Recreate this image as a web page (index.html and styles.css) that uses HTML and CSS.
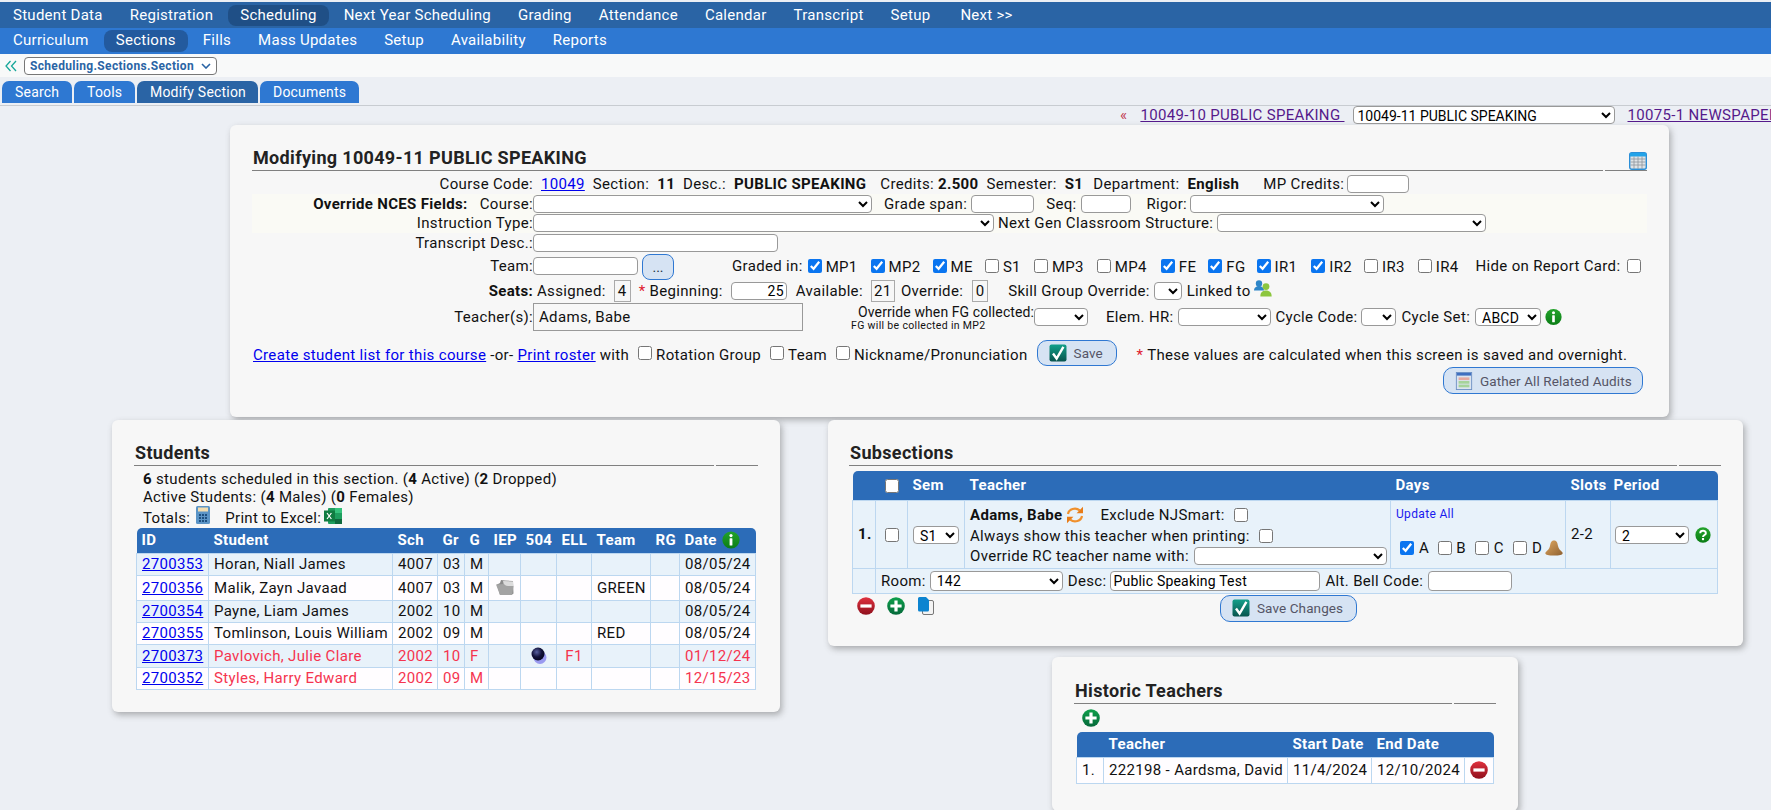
FILE: index.html
```html
<!DOCTYPE html>
<html lang="en">
<head>
<meta charset="utf-8">
<title>Scheduling Section</title>
<link rel="stylesheet" href="styles.css">
</head>
<body>
<svg class="defs" aria-hidden="true">
  <defs>
    <linearGradient id="gGreen" x1="0" y1="0" x2="0" y2="1"><stop offset="0" stop-color="#23a32b"/><stop offset="1" stop-color="#0b7d16"/></linearGradient>
    <linearGradient id="gRed" x1="0" y1="0" x2="0" y2="1"><stop offset="0" stop-color="#e0323f"/><stop offset="1" stop-color="#8f0f1c"/></linearGradient>
    <linearGradient id="gPlus" x1="0" y1="0" x2="0" y2="1"><stop offset="0" stop-color="#0fa04c"/><stop offset="1" stop-color="#05693a"/></linearGradient>
    <linearGradient id="gTeal" x1="0" y1="0" x2="0" y2="1"><stop offset="0" stop-color="#12a08a"/><stop offset="1" stop-color="#08544e"/></linearGradient>
    <linearGradient id="gBell" x1="0" y1="0" x2="1" y2="1"><stop offset="0" stop-color="#e0a860"/><stop offset="1" stop-color="#8e6030"/></linearGradient>
    <radialGradient id="gBall" cx=".4" cy=".35" r=".7"><stop offset="0" stop-color="#5860a0"/><stop offset=".55" stop-color="#12123a"/><stop offset="1" stop-color="#05051c"/></radialGradient>
    <symbol id="i-info" viewBox="0 0 18 18"><circle cx="9" cy="9" r="8.6" fill="url(#gGreen)"/><circle cx="9" cy="4.6" r="1.6" fill="#fff"/><rect x="7.6" y="7.2" width="2.8" height="7.4" rx=".6" fill="#fff"/></symbol>
    <symbol id="i-help" viewBox="0 0 18 18"><circle cx="9" cy="9" r="8.6" fill="url(#gGreen)"/><path d="M5.9 6.9C5.9 3.4 12.2 3.4 12.2 6.9 12.2 9 9 9 9 11.2" fill="none" stroke="#fff" stroke-width="2.2"/><rect x="7.8" y="12.4" width="2.4" height="2.4" fill="#fff"/></symbol>
    <symbol id="i-minus" viewBox="0 0 18 18"><circle cx="9" cy="9" r="8.8" fill="url(#gRed)"/><rect x="3.4" y="7.4" width="11.2" height="3.2" fill="#fff"/></symbol>
    <symbol id="i-plus" viewBox="0 0 18 18"><circle cx="9" cy="9" r="8.8" fill="url(#gPlus)"/><path d="M3.4 9h11.2M9 3.4v11.2" stroke="#fff" stroke-width="3.2"/></symbol>
    <symbol id="i-check" viewBox="0 0 18 18"><rect x=".5" y=".5" width="17" height="17" rx="2" fill="url(#gTeal)"/><path d="M4 9.500l3.600 5L14.400 2.800" fill="none" stroke="#fff" stroke-width="2.400"/></symbol>
    <symbol id="i-cal" viewBox="0 0 18 18"><rect x=".7" y=".7" width="16.600" height="16.600" rx="2" fill="#dfe3e6" stroke="#2b8fd8" stroke-width="1.400"/><rect x="1" y="1" width="16" height="3.500" fill="#22a3e8"/><path d="M1.500 7h15M1.500 10h15M1.500 13h15M5 4.500v12.500M9 4.500v12.500M13 4.500v12.500" stroke="#8d959c" stroke-width=".8"/></symbol>
    <symbol id="i-people" viewBox="0 0 18 17"><circle cx="5" cy="3.400" r="3.200" fill="#2e86c8"/><path d="M0 10.500c0-6 10-6 10 0z" fill="#2e86c8"/><circle cx="12" cy="6.600" r="3.400" fill="#8cc63e"/><path d="M6.400 16.400c-.8-7.800 11.800-7.800 11.200 0z" fill="#8cc63e"/></symbol>
    <symbol id="i-grid" viewBox="0 0 18 20"><rect x=".5" y=".5" width="17" height="19" fill="#dbe4ef" stroke="#6c8fc4"/><rect x="1" y="1" width="16" height="3" fill="#3f6fc0"/><rect x="3" y="6" width="12" height="3" fill="#e6a9a0"/><rect x="3" y="10" width="12" height="3" fill="#a5d39a"/><rect x="3" y="14" width="12" height="3" fill="#a5d39a"/></symbol>
    <symbol id="i-calc" viewBox="0 0 14 18"><rect width="14" height="18" rx="1.500" fill="#5b94c6"/><rect x="2" y="1.500" width="10" height="4" fill="#f1dcb0"/><path d="M3 8h2v2H3zM6 8h2v2H6zM9 8h2v2H9zM3 11h2v2H3zM6 11h2v2H6zM9 11h2v2H9zM3 14h2v2H3zM6 14h2v2H6zM9 14h2v2H9z" fill="#1d4f80"/></symbol>
    <symbol id="i-xls" viewBox="0 0 18 16"><rect x="4" y="0" width="14" height="16" rx="1" fill="#1e9e5e"/><rect x="11" y="0" width="7" height="5" fill="#35c27c"/><rect x="11" y="11" width="7" height="5" fill="#0f6a3e"/><rect x="0" y="2.500" width="11" height="11" fill="#107c41"/><path d="M3 5l4.400 6M7.400 5L3 11" stroke="#fff" stroke-width="1.200"/></symbol>
    <symbol id="i-folder" viewBox="0 0 18 15"><path d="M1 4.500L4 3l1-3 4 .5 8 .5.500 12.500-2 1.500-11.500 0z" fill="#8c8c8c"/><path d="M7 1l10 .5.300 5L8 5.500z" fill="#dcdcdc"/><path d="M0 4.500l8-.5 2 2h7.500L16 15H4z" fill="#a3a3a3"/></symbol>
    <symbol id="i-ball" viewBox="0 0 16 18"><circle cx="9" cy="10.500" r="6.500" fill="#9a9af0"/><circle cx="7" cy="7" r="6.500" fill="url(#gBall)"/></symbol>
    <symbol id="i-sync" viewBox="0 0 18 18"><path d="M2 8C2.800 3 9.500.8 13.700 4.400" fill="none" stroke="#f0902c" stroke-width="2.200"/><path d="M17 .8v6.400h-6.400z" fill="#e87c18"/><path d="M16 10c-.8 5-7.500 7.200-11.700 3.600" fill="none" stroke="#f0902c" stroke-width="2.200"/><path d="M1 17.200v-6.400h6.400z" fill="#e87c18"/></symbol>
    <symbol id="i-bell" viewBox="0 0 18 16"><path d="M9 .5C6 .5 5.500 3 5 6c-.5 3-2.800 4.500-4.500 6.500C-.5 15 3 15.500 9 15.500s9.500-.5 8.500-3C15.800 10.500 13.500 9 13 6 12.500 3 12 .5 9 .5z" fill="url(#gBell)"/></symbol>
    <symbol id="i-copy" viewBox="0 0 16 18"><rect x="4.500" y="3.500" width="11" height="14" rx="1.500" fill="#f4f4f4" stroke="#777"/><path d="M1.500 0H8l3 3v10a1.500 1.500 0 0 1-1.500 1.500h-8A1.500 1.500 0 0 1 0 13V1.500A1.500 1.500 0 0 1 1.500 0z" fill="#0d84d0"/></symbol>
  </defs>
</svg>

<header>
  <nav class="nav nav-top">
    <a class="nav-item">Student Data</a><a class="nav-item">Registration</a><a class="nav-item is-on">Scheduling</a><a class="nav-item">Next Year Scheduling</a><a class="nav-item">Grading</a><a class="nav-item">Attendance</a><a class="nav-item">Calendar</a><a class="nav-item">Transcript</a><a class="nav-item">Setup</a><a class="nav-item nav-next">Next &gt;&gt;</a>
  </nav>
  <nav class="nav nav-sub">
    <a class="nav-item">Curriculum</a><a class="nav-item is-on">Sections</a><a class="nav-item">Fills</a><a class="nav-item">Mass Updates</a><a class="nav-item">Setup</a><a class="nav-item">Availability</a><a class="nav-item">Reports</a>
  </nav>
  <div class="crumb">
    <svg class="crumb-back" viewBox="0 0 12 12"><path d="M5.500 1L1 6l4.500 5M11 1L6.500 6l4.500 5" fill="none" stroke="#17a79a" stroke-width="1.300"/></svg>
    <select class="crumb-select"><option>Scheduling.Sections.Section</option></select>
  </div>
  <div class="tabs">
    <a class="tab">Search</a><a class="tab">Tools</a><a class="tab is-on">Modify Section</a><a class="tab">Documents</a>
  </div>
</header>

<div class="pager">
  <span class="pager-prev">«</span>
  <a class="pager-link" href="#">10049-10 PUBLIC SPEAKING&nbsp;</a>
  <select class="pager-select"><option>10049-11 PUBLIC SPEAKING</option></select>
  <a class="pager-link" href="#">10075-1 NEWSPAPER</a>
</div>

<main>
  <section class="card card-main">
    <div class="heading">
      <h2 class="heading-main">Modifying 10049-11 PUBLIC SPEAKING</h2>
      <div class="heading-side"><svg class="ic-cal"><use href="#i-cal"/></svg></div>
    </div>

    <div class="row r1">
      <span class="lbl">Course Code:</span><a class="lnk ml8" href="#">10049</a>
      <span class="ml8">Section:</span><b class="ml8">11</b><span class="ml8">Desc.:</span><b class="ml8">PUBLIC SPEAKING</b>
      <span class="ml14">Credits:</span><b class="ml4">2.500</b><span class="ml8">Semester:</span><b class="ml8">S1</b><span class="ml10">Department:</span><b class="ml8">English</b>
      <span class="ml24">MP Credits:</span><input class="inp w62 ml3" type="text">
    </div>

    <div class="tint">
      <div class="row r2">
        <span class="lbl"><b class="override">Override NCES Fields:</b>Course:</span><select class="sel w339"></select>
        <span class="ml12">Grade span:</span><input class="inp w63 ml4" type="text">
        <span class="ml12">Seq:</span><input class="inp w50 ml4" type="text">
        <span class="ml16">Rigor:</span><select class="sel w194 ml3"></select>
      </div>
      <div class="row r2">
        <span class="lbl">Instruction Type:</span><select class="sel w461"></select>
        <span class="ml4">Next Gen Classroom Structure:</span><select class="sel w269 ml4"></select>
      </div>
    </div>

    <div class="row r4">
      <span class="lbl">Transcript Desc.:</span><input class="inp w245" type="text">
    </div>

    <div class="row r5">
      <span class="lbl">Team:</span><input class="inp w105" type="text"><button class="btn-dots ml4" type="button">...</button>
      <span class="ml58">Graded in:</span>
      <input class="cb ml5" type="checkbox" checked><span class="ml4">MP1</span>
      <input class="cb ml13" type="checkbox" checked><span class="ml4">MP2</span>
      <input class="cb ml12" type="checkbox" checked><span class="ml4">ME</span>
      <input class="cb ml12" type="checkbox"><span class="ml4">S1</span>
      <input class="cb ml13" type="checkbox"><span class="ml4">MP3</span>
      <input class="cb ml13" type="checkbox"><span class="ml4">MP4</span>
      <input class="cb ml14" type="checkbox" checked><span class="ml4">FE</span>
      <input class="cb ml12" type="checkbox" checked><span class="ml4">FG</span>
      <input class="cb ml11" type="checkbox" checked><span class="ml4">IR1</span>
      <input class="cb ml14" type="checkbox" checked><span class="ml4">IR2</span>
      <input class="cb ml12" type="checkbox"><span class="ml4">IR3</span>
      <input class="cb ml13" type="checkbox"><span class="ml4">IR4</span>
      <span class="ml17">Hide on Report Card:</span><input class="cb ml7" type="checkbox">
    </div>

    <div class="row r6">
      <span class="lbl"><b>Seats:</b></span>
      <span class="ml4">Assigned:</span><span class="box w17 ml8">4</span>
      <span class="ml8"><span class="req">*</span> Beginning:</span><input class="inp w56 ml8 num" type="text" value="25">
      <span class="ml9">Available:</span><span class="box w24 ml8">21</span>
      <span class="ml6">Override:</span><span class="box w16 ml9">0</span>
      <span class="ml20">Skill Group Override:</span><select class="sel w28 ml4"></select>
      <span class="ml5">Linked to</span><svg class="ic-people"><use href="#i-people"/></svg>
    </div>

    <div class="row r7">
      <span class="lbl">Teacher(s):</span><div class="teacher-box">Adams, Babe</div>
      <div class="fg-note"><span class="fg-main">Override when FG collected:</span><span class="fg-small">FG will be collected in MP2</span></div>
      <select class="sel w54"></select>
      <span class="ml18">Elem. HR:</span><select class="sel w93 ml4"></select>
      <span class="ml5">Cycle Code:</span><select class="sel w35 ml4"></select>
      <span class="ml5">Cycle Set:</span><select class="sel w66 ml5"><option>ABCD</option></select>
      <svg class="ic-info ml4"><use href="#i-info"/></svg>
    </div>

    <div class="row r8">
      <a class="lnk" href="#">Create student list for this course</a><span class="ml4">-or-</span>
      <a class="lnk ml4" href="#">Print roster</a><span class="ml4">with</span>
      <input class="cb ml9" type="checkbox"><span class="ml4">Rotation Group</span>
      <input class="cb ml9" type="checkbox"><span class="ml4">Team</span>
      <input class="cb ml9" type="checkbox"><span class="ml4">Nickname/Pronunciation</span>
      <button class="btn ml9 btn-save" type="button"><svg class="ic-btn"><use href="#i-check"/></svg>Save</button>
      <span class="ml20"><span class="req">*</span> These values are calculated when this screen is saved and overnight.</span>
    </div>

    <div class="row r9">
      <button class="btn btn-gather" type="button"><svg class="ic-btn"><use href="#i-grid"/></svg>Gather All Related Audits</button>
    </div>
  </section>

  <div class="lower">
    <section class="card card-students">
      <div class="heading"><h2 class="heading-main">Students</h2><div class="heading-side"></div></div>
      <div class="summary">
        <div class="summary-line"><b>6</b> students scheduled in this section. (<b>4</b> Active) (<b>2</b> Dropped)</div>
        <div class="summary-line">Active Students: (<b>4</b> Males) (<b>0</b> Females)</div>
        <div class="summary-line summary-tools">Totals:<svg class="ic-calc"><use href="#i-calc"/></svg><span class="ml15">Print to Excel:</span><svg class="ic-xls"><use href="#i-xls"/></svg></div>
      </div>
      <table class="grid students">
        <thead>
          <tr><th>ID</th><th>Student</th><th>Sch</th><th>Gr</th><th>G</th><th>IEP</th><th>504</th><th>ELL</th><th>Team</th><th>RG</th><th>Date<svg class="ic-date"><use href="#i-info"/></svg></th></tr>
        </thead>
        <tbody>
          <tr class="h22 odd"><td><a class="lnk" href="#">2700353</a></td><td>Horan, Niall James</td><td>4007</td><td>03</td><td>M</td><td></td><td></td><td></td><td></td><td></td><td>08/05/24</td></tr>
          <tr class="h25"><td><a class="lnk" href="#">2700356</a></td><td>Malik, Zayn Javaad</td><td>4007</td><td>03</td><td>M</td><td class="ctr"><svg class="ic-folder"><use href="#i-folder"/></svg></td><td></td><td></td><td>GREEN</td><td></td><td>08/05/24</td></tr>
          <tr class="h22 odd"><td><a class="lnk" href="#">2700354</a></td><td>Payne, Liam James</td><td>2002</td><td>10</td><td>M</td><td></td><td></td><td></td><td></td><td></td><td>08/05/24</td></tr>
          <tr class="h22"><td><a class="lnk" href="#">2700355</a></td><td>Tomlinson, Louis William</td><td>2002</td><td>09</td><td>M</td><td></td><td></td><td></td><td>RED</td><td></td><td>08/05/24</td></tr>
          <tr class="h23 odd dropped"><td><a class="lnk" href="#">2700373</a></td><td>Pavlovich, Julie Clare</td><td>2002</td><td>10</td><td>F</td><td></td><td class="ctr"><svg class="ic-ball"><use href="#i-ball"/></svg></td><td class="ctr">F1</td><td></td><td></td><td>01/12/24</td></tr>
          <tr class="h22 dropped"><td><a class="lnk" href="#">2700352</a></td><td>Styles, Harry Edward</td><td>2002</td><td>09</td><td>M</td><td></td><td></td><td></td><td></td><td></td><td>12/15/23</td></tr>
        </tbody>
      </table>
    </section>

    <div class="right-col">
      <section class="card card-sub">
        <div class="heading"><h2 class="heading-main">Subsections</h2><div class="heading-side"></div></div>
        <table class="grid subs">
          <thead>
            <tr><th></th><th class="ctr"><input class="cb cb-head" type="checkbox"></th><th>Sem</th><th>Teacher</th><th>Days</th><th>Slots</th><th>Period</th></tr>
          </thead>
          <tbody>
            <tr class="odd h68">
              <td class="num-cell"><b>1.</b></td>
              <td class="ctr"><input class="cb" type="checkbox"></td>
              <td class="ctr"><select class="sel w46"><option>S1</option></select></td>
              <td class="teacher-cell">
                <div class="t-line t-first"><b>Adams, Babe</b><svg class="ic-sync"><use href="#i-sync"/></svg><span class="ml16">Exclude NJSmart:</span><input class="cb ml9" type="checkbox"></div>
                <div class="t-line t-second">Always show this teacher when printing:<input class="cb ml9" type="checkbox"></div>
                <div class="t-line t-third">Override RC teacher name with:<select class="sel w193 ml5"></select></div>
              </td>
              <td class="days-cell">
                <a class="update-all" href="#">Update All</a>
                <div class="days-row">
                  <input class="cb" type="checkbox" checked><span class="ml5">A</span>
                  <input class="cb ml9" type="checkbox"><span class="ml4">B</span>
                  <input class="cb ml9" type="checkbox"><span class="ml5">C</span>
                  <input class="cb ml9" type="checkbox"><span class="ml5">D</span>
                  <svg class="ic-bell ml3"><use href="#i-bell"/></svg>
                </div>
              </td>
              <td>2-2</td>
              <td class="period-cell"><select class="sel w74"><option>2</option></select><svg class="ic-help ml6"><use href="#i-help"/></svg></td>
            </tr>
            <tr class="odd h25">
              <td></td>
              <td colspan="6" class="room-cell">
                <div class="room-row">
                  <span>Room:</span><select class="sel w133 ml4 sel-tall"><option>142</option></select>
                  <span class="ml5">Desc:</span><input class="inp w210 ml4 inp-tall" type="text" value="Public Speaking Test">
                  <span class="ml5">Alt. Bell Code:</span><input class="inp w84 ml5 inp-tall" type="text">
                </div>
              </td>
            </tr>
          </tbody>
        </table>
        <div class="sub-actions">
          <svg class="ic-round"><use href="#i-minus"/></svg>
          <svg class="ic-round ml12"><use href="#i-plus"/></svg>
          <svg class="ic-copy ml13"><use href="#i-copy"/></svg>
          <button class="btn btn-changes" type="button"><svg class="ic-btn"><use href="#i-check"/></svg>Save Changes</button>
        </div>
      </section>

      <section class="card card-hist">
        <div class="heading"><h2 class="heading-main">Historic Teachers</h2><div class="heading-side"></div></div>
        <svg class="ic-round ic-hist-add"><use href="#i-plus"/></svg>
        <table class="grid hist">
          <thead><tr><th></th><th>Teacher</th><th>Start Date</th><th>End Date</th><th></th></tr></thead>
          <tbody><tr class="h26"><td>1.</td><td>222198 - Aardsma, David</td><td>11/4/2024</td><td>12/10/2024</td><td class="ctr"><svg class="ic-round"><use href="#i-minus"/></svg></td></tr></tbody>
        </table>
      </section>
    </div>
  </div>
</main>
</body>
</html>
```
FILE: styles.css
```css
* { box-sizing: border-box; }
html, body { height: 810px; overflow: hidden; }
body { margin: 0; background: #eceff4; color: #111; font: 15px/18px Roboto, sans-serif; letter-spacing: .33px; }
.defs { position: absolute; width: 0; height: 0; }
svg { flex: none; display: block; }
b { font-weight: 700; }
h2 { margin: 0; }

/* top navigation */
.nav { display: flex; color: #fff; font-size: 15px; letter-spacing: .27px; white-space: nowrap; }
.nav-top { margin-top: 2px; height: 26px; padding: 3px 1px 0; background: #2a64a5; }
.nav-sub { height: 26px; padding: 2px 1px 0; background: #2e78d2; }
.nav-item { padding: 0 12px; margin-right: 3px; height: 21px; line-height: 21px; border-radius: 8px; }
.nav-sub .nav-item { height: 22px; line-height: 20px; }
.nav-top .is-on { background: #1f4f86; }
.nav-sub .is-on { background: #235a9e; }
.nav-next { margin-left: 3px; }

.crumb { height: 23px; padding-left: 5px; display: flex; align-items: center; background: #f8f9f9; }
.crumb-back { width: 12px; height: 12px; }
.crumb-select { margin-left: 7px; width: 193px; height: 18px; padding: 0 2px 0 5px; font: 700 12px Roboto, sans-serif; letter-spacing: .33px; color: #2a64a5; appearance: none; background: #fff url("data:image/svg+xml,%3Csvg xmlns='http://www.w3.org/2000/svg' viewBox='0 0 10 6'%3E%3Cpath d='M1 1l4 4 4-4' fill='none' stroke='%232a64a5' stroke-width='1.600'/%3E%3C/svg%3E") no-repeat right 5px center / 10px 6px; border: 1px solid #777; border-radius: 4px; }

.tabs { display: flex; gap: 2px; padding: 4px 0 0 2px; height: 28px; border-bottom: 2px solid #eceff4; color: #fff; font-size: 14px; letter-spacing: .2px; white-space: nowrap; }
.tab { padding: 0 0 0 13px; height: 22px; line-height: 22px; background: #2e78d2; border-radius: 7px 7px 0 0; }
.tab:nth-child(1) { width: 70px; }
.tab:nth-child(2) { width: 61px; }
.tab:nth-child(3) { width: 121px; }
.tab:nth-child(4) { width: 99px; }
.tab.is-on { background: #2a64a5; }

.pager { height: 20px; padding: 0 0 2px 1120px; border-top: 1px solid #c8ccd1; display: flex; align-items: center; white-space: nowrap; overflow: hidden; }
.pager-prev { color: #c23a50; }
.pager-link { margin-left: 13px; color: #551a8b; flex: none; }
.pager-select { margin-left: 8px; width: 262px; height: 18px; font: 14px Roboto, sans-serif; flex: none; background: #fff; border: 1px solid #999; border-radius: 4px; }
.pager-select + .pager-link { margin-left: 13px; }

/* cards */
.card { background: #f7f7f7; border-radius: 6px; box-shadow: 2px 3px 6px rgba(90, 90, 90, .45); padding: 23px 22px; }
.card-main { margin-left: 230px; width: 1439px; height: 292px; }
.heading { display: flex; height: 23px; }
.heading-main { flex: 1; height: 23px; font-size: 18px; line-height: 20px; font-weight: 700; padding-left: 1px; border-bottom: 1px solid #808080; color: #222; }
.heading-side { position: relative; margin-left: 2px; width: 42px; height: 23px; border-bottom: 1px solid #808080; }
.ic-cal { position: absolute; right: 0; top: 4px; width: 18px; height: 18px; }

/* form rows */
.row { display: flex; align-items: center; white-space: nowrap; }
.lbl { width: 281px; text-align: right; flex: none; }
.r1 { height: 21px; margin-top: 2px; }
.tint { background: #fafaf5; height: 39px; }
.r2 { height: 19.500px; }
.r4 { height: 19px; }
.r5 { height: 27px; }
.r5 > .ml4 { margin-top: 3px; }
.r6 { height: 24px; }
.r7 { height: 28px; }
.r8 { height: 26px; margin-top: 9px; padding-left: 1px; }
.r8 > a, .r8 > span { margin-top: 3px; }
.r9 { height: 27px; margin-top: 1px; justify-content: flex-end; padding-right: 4px; }
.override { margin-right: 12px; }
.lnk { color: #00e; text-decoration: underline; }
.req { color: #e0182d; }

.sel, .inp { height: 18px; padding: 0 2px; font: 14px Roboto, sans-serif; letter-spacing: .2px; color: #000; background: #fff; border: 1px solid #999; border-radius: 4px; flex: none; }
.num { text-align: right; }
.cb { width: 14px; height: 14px; margin: 0; flex: none; accent-color: #0a75f0; }
.box { height: 22px; line-height: 20px; text-align: center; border: 1px solid #aaa; flex: none; }
.teacher-box { width: 270px; height: 28px; line-height: 26px; padding-left: 5px; border: 1px solid #999; flex: none; }
.fg-note { position: relative; width: 231px; height: 28px; flex: none; font-size: 14px; letter-spacing: .1px; }
.fg-main { position: absolute; right: 0; top: 0; }
.fg-small { position: absolute; left: 48px; top: 16px; font-size: 10.500px; line-height: 14px; letter-spacing: .33px; }
.btn-dots { width: 32px; height: 26px; padding: 0; font: 14px Roboto, sans-serif; color: #234; background: #d6e3f3; border: 1px solid #2f78d2; border-radius: 8px; flex: none; }
.btn { display: flex; align-items: center; height: 26px; padding: 0; font: 13.500px Roboto, sans-serif; letter-spacing: .1px; color: #556; background: #d6e3f3; border: 1px solid #2f78d2; border-radius: 10px; flex: none; }
.btn-save { width: 80px; padding-left: 11px; }
.btn-gather { width: 200px; height: 27px; padding-left: 11px; }
.btn-changes { width: 137px; height: 27px; margin-left: 286px; padding-left: 11px; }
.ic-btn { width: 18px; height: 18px; margin-right: 7px; }
.ic-people { width: 18px; height: 17px; margin: -6px 0 0 3px; }
.ic-info { width: 17px; height: 18px; }

/* lower area */
.lower { display: flex; align-items: flex-start; margin-top: 3px; }
.card-students { margin-left: 112px; width: 668px; height: 292px; }
.summary { padding: 4px 0 0 9px; }
.summary-line { height: 18px; }
.summary-tools { display: flex; align-items: flex-end; height: 22px; line-height: 20px; }
.ic-calc { width: 14px; height: 18px; margin: 0 0 4px 6px; }
.ic-xls { width: 18px; height: 16px; margin: 0 0 4px 3px; }

.grid { border-collapse: collapse; table-layout: fixed; }
.grid th { background: #2c6cb8; color: #fff; text-align: left; padding: 0 0 0 5px; font-weight: 700; white-space: nowrap; }
.grid thead th:first-child { border-top-left-radius: 5px; }
.grid thead th:last-child { border-top-right-radius: 5px; }
.grid td { border: 1px solid #bcd7f0; padding: 0 0 0 5px; background: #fffdff; white-space: nowrap; }
.grid .odd td { background: #e8f2fa; }
.grid .ctr { text-align: center; padding: 0; }
.grid .ctr svg { margin: 0 auto; }
.h22 { height: 22px; }
.h23 { height: 23px; }
.h25 { height: 25px; }
.h26 { height: 26px; }
.h68 { height: 68px; }

.students { width: 619px; margin-left: 2px; }
.students thead tr { height: 25px; }
.students th:nth-child(1) { width: 72px; }
.students th:nth-child(2) { width: 184px; }
.students th:nth-child(3) { width: 45px; }
.students th:nth-child(4) { width: 27px; }
.students th:nth-child(5) { width: 24px; }
.students th:nth-child(6) { width: 32px; }
.students th:nth-child(7) { width: 36px; }
.students th:nth-child(8) { width: 35px; }
.students th:nth-child(9) { width: 59px; }
.students th:nth-child(10) { width: 29px; }
.students th:nth-child(11) { width: 76px; }
.dropped td { color: #f5344f; }
.ic-date { display: inline-block; vertical-align: -4px; width: 18px; height: 18px; margin-left: 5px; }
.students th:last-child svg { display: inline-block; }
.ic-folder { width: 18px; height: 15px; }
.ic-ball { width: 16px; height: 18px; }

.right-col { margin-left: 48px; width: 915px; }
.card-sub { height: 226px; padding-left: 21px; }
.subs { width: 865px; margin: 5px 0 0 3px; }
.subs thead tr { height: 29px; }
.subs th:nth-child(1) { width: 23px; }
.subs th:nth-child(2) { width: 32px; }
.subs th:nth-child(3) { width: 57px; }
.subs th:nth-child(4) { width: 426px; }
.subs th:nth-child(5) { width: 175px; }
.subs th:nth-child(6) { width: 45px; }
.subs th:nth-child(7) { width: 107px; }
.cb-head { display: inline-block; vertical-align: middle; }
.subs .num-cell { padding-left: 5px; }
.subs .ctr .cb, .subs .ctr .sel { margin: 0 auto; display: inline-block; vertical-align: middle; }
.subs .teacher-cell { padding-top: 2px; }
.t-line { display: flex; align-items: center; }
.t-first { height: 22px; }
.t-second { height: 20px; }
.t-third { height: 20px; }
.ic-sync { width: 18px; height: 18px; margin-left: 4px; }
.days-cell { vertical-align: top; }
.update-all { display: block; margin-top: 4px; color: #1a1aee; font-size: 12px; text-decoration: none; }
.days-row { display: flex; align-items: center; height: 22px; margin: 14px 0 0 4px; }
.ic-bell { width: 18px; height: 16px; }
.subs .period-cell { padding-left: 4px; }
.subs th:nth-child(7) { padding-left: 3px; }
.period-cell .sel { display: inline-block; vertical-align: middle; }
.ic-help { display: inline-block; width: 16px; height: 16px; vertical-align: middle; }
.period-cell svg { display: inline-block; }
.room-cell .room-row { display: flex; align-items: center; }
.sel-tall, .inp-tall { height: 20px; }
.sub-actions { display: flex; align-items: flex-start; margin: 1px 0 0 8px; padding-top: 2px; height: 27px; }
.ic-round { width: 18px; height: 18px; }
.ic-copy { width: 16px; height: 18px; }
.btn-changes { margin-top: -2px; }

.card-hist { margin: 11px 0 0 224px; width: 466px; height: 154px; padding-top: 24px; }
.ic-hist-add { margin: 5px 0 5px 8px; }
.hist { width: 417px; margin-left: 2px; }
.hist thead tr { height: 25px; }
.hist th:nth-child(1) { width: 27px; }
.hist th:nth-child(2) { width: 184px; }
.hist th:nth-child(3) { width: 84px; }
.hist th:nth-child(4) { width: 93px; }
.hist th:nth-child(5) { width: 29px; }

/* sizing helpers */
.w17 { width: 17px; } .w24 { width: 24px; } .w16 { width: 16px; } .w28 { width: 28px; } .w35 { width: 35px; } .w46 { width: 46px; } .w50 { width: 50px; } .w54 { width: 54px; } .w56 { width: 56px; } .w62 { width: 62px; } .w63 { width: 63px; } .w66 { width: 66px; } .w74 { width: 74px; } .w84 { width: 84px; } .w93 { width: 93px; } .w105 { width: 105px; } .w133 { width: 133px; } .w193 { width: 193px; } .w194 { width: 194px; } .w210 { width: 210px; } .w245 { width: 245px; } .w269 { width: 269px; } .w339 { width: 339px; } .w461 { width: 461px; }
.ml3 { margin-left: 3px; } .ml4 { margin-left: 4px; } .ml5 { margin-left: 5px; } .ml6 { margin-left: 6px; } .ml7 { margin-left: 7px; } .ml8 { margin-left: 8px; } .ml9 { margin-left: 9px; } .ml10 { margin-left: 10px; } .ml11 { margin-left: 11px; } .ml12 { margin-left: 12px; } .ml13 { margin-left: 13px; } .ml14 { margin-left: 14px; } .ml15 { margin-left: 15px; } .ml16 { margin-left: 16px; } .ml17 { margin-left: 17px; } .ml18 { margin-left: 18px; } .ml20 { margin-left: 20px; } .ml24 { margin-left: 24px; } .ml58 { margin-left: 58px; }
```
